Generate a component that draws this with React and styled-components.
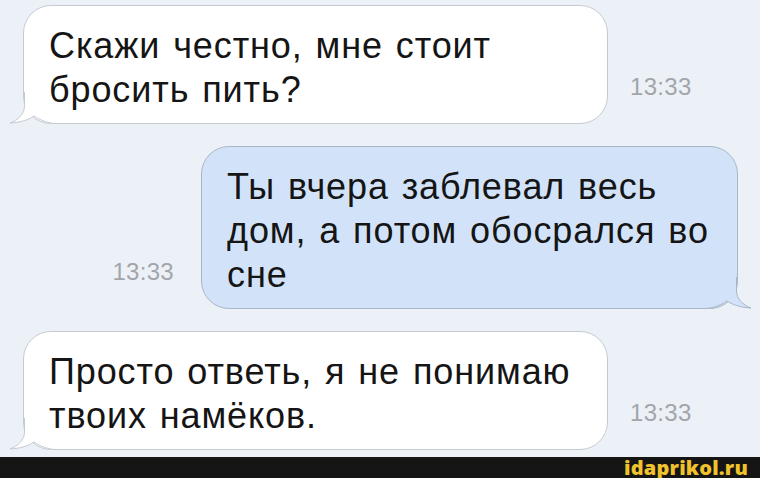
import React from "react";
import styled, { createGlobalStyle } from "styled-components";

const Global = createGlobalStyle`
  html, body { margin: 0; padding: 0; }
  body {
    background: #ecf1f8;
    font-family: "Liberation Sans", Arial, sans-serif;
    overflow: hidden;
  }
`;

const Screen = styled.div`
  width: 760px;
  height: 478px;
  display: flex;
  flex-direction: column;
  background: #ecf1f8;
`;

const Thread = styled.div`
  flex: 1;
  display: flex;
  flex-direction: column;
  gap: 22px;
  padding-top: 5px;
`;

const Row = styled.div`
  display: flex;
  align-items: flex-end;
  justify-content: ${(p) => (p.$out ? "flex-end" : "flex-start")};
  gap: ${(p) => (p.$out ? "27px" : "22px")};
  padding: ${(p) => (p.$out ? "0 22px 0 0" : "0 0 0 23px")};
`;

const Bubble = styled.div`
  position: relative;
  box-sizing: border-box;
  width: ${(p) => p.$w}px;
  padding: 18px 16px 11px 25px;
  border-radius: 28px;
  background: ${(p) => (p.$out ? "#d2e3f9" : "#ffffff")};
  border: 1px solid ${(p) => (p.$out ? "#a9b6c6" : "#c5cad1")};
  color: #151515;
  font-size: 36px;
  line-height: 44px;
  letter-spacing: 0.9px;
  word-spacing: 2px;
  white-space: nowrap;
`;

const TailSvg = styled.svg`
  position: absolute;
  bottom: -1px;
  width: 50px;
  height: 40px;
  overflow: visible;
  ${(p) => (p.$out ? "right: -14px; transform: scaleX(-1);" : "left: -14px;")}
`;

const Time = styled.span`
  font-size: 24px;
  color: #a2a5aa;
  margin-bottom: 23px;
  letter-spacing: 0.3px;
`;

const Footer = styled.div`
  height: 21px;
  background: #151515;
  display: flex;
  align-items: center;
  justify-content: flex-end;
  padding-right: 12px;
`;

const Mark = styled.span`
  font-family: "Open Sans", "Liberation Sans", sans-serif;
  font-weight: 800;
  font-size: 20px;
  color: #f0c22c;
  letter-spacing: 0.2px;
  line-height: 21px;
`;

function Tail({ out, fill, stroke }) {
  return (
    <TailSvg $out={out} viewBox="0 0 50 40">
      <path
        d="M14.5,8 L14.5,22 C14.5,30 8,36 0,39 C10,38.5 18,36 24,32 C30,36 38,39.5 44,39.5 L44,37.5 A 25 25 0 0 1 16.5 11 Z"
        fill={fill}
      />
      <path
        d="M14.5,8 L14.5,22 C14.5,30 8,36 0,39 C10,38.5 18,36 24,32 C30,36 38,39.5 46,39.5"
        fill="none"
        stroke={stroke}
        strokeWidth="1"
      />
    </TailSvg>
  );
}

function Incoming({ children }) {
  return (
    <Row>
      <Bubble $w={585}>
        {children}
        <Tail fill="#ffffff" stroke="#c5cad1" />
      </Bubble>
      <Time>13:33</Time>
    </Row>
  );
}

function Outgoing({ children }) {
  return (
    <Row $out>
      <Time>13:33</Time>
      <Bubble $out $w={537}>
        {children}
        <Tail out fill="#d2e3f9" stroke="#a9b6c6" />
      </Bubble>
    </Row>
  );
}

export default function App() {
  return (
    <Screen>
      <Global />
      <Thread>
        <Incoming>
          Скажи честно, мне стоит
          <br />
          бросить пить?
        </Incoming>
        <Outgoing>
          Ты вчера заблевал весь
          <br />
          дом, а потом обосрался во
          <br />
          сне
        </Outgoing>
        <Incoming>
          Просто ответь, я не понимаю
          <br />
          твоих намёков.
        </Incoming>
      </Thread>
      <Footer>
        <Mark>idaprikol.ru</Mark>
      </Footer>
    </Screen>
  );
}
